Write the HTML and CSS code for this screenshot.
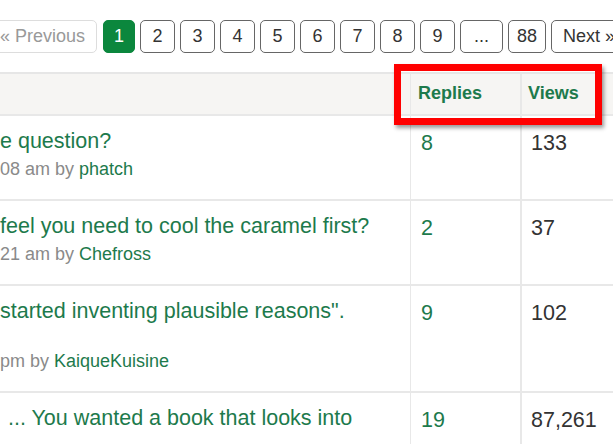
FILE: index.html
```html
<!DOCTYPE html>
<html>
<head>
<meta charset="utf-8">
<link rel="stylesheet" href="styles.css">
</head>
<body>
<div class="page">
  <nav class="pager">
    <span class="pg prev">« Previous</span>
    <span class="pg active">1</span>
    <span class="pg">2</span>
    <span class="pg">3</span>
    <span class="pg">4</span>
    <span class="pg">5</span>
    <span class="pg">6</span>
    <span class="pg">7</span>
    <span class="pg">8</span>
    <span class="pg">9</span>
    <span class="pg dots">...</span>
    <span class="pg">88</span>
    <span class="pg next">Next »</span>
  </nav>

  <div class="topics">
    <div class="row head">
      <div class="cell title"></div>
      <div class="cell hnum">Replies</div>
      <div class="cell hnum hviews">Views</div>
    </div>

    <div class="row">
      <div class="cell title">
        <div class="t">e question?</div>
        <div class="meta">08 am by <span class="user">phatch</span></div>
      </div>
      <div class="cell num replies">8</div>
      <div class="cell num views">133</div>
    </div>

    <div class="row">
      <div class="cell title">
        <div class="t">feel you need to cool the caramel first?</div>
        <div class="meta">21 am by <span class="user">Chefross</span></div>
      </div>
      <div class="cell num replies">2</div>
      <div class="cell num views">37</div>
    </div>

    <div class="row">
      <div class="cell title">
        <div class="t">started inventing plausible reasons".</div>
        <div class="meta gap">pm by <span class="user">KaiqueKuisine</span></div>
      </div>
      <div class="cell num replies">9</div>
      <div class="cell num views">102</div>
    </div>

    <div class="row">
      <div class="cell title">
        <div class="t indent">... You wanted a book that looks into</div>
      </div>
      <div class="cell num replies">19</div>
      <div class="cell num views">87,261</div>
    </div>
  </div>

  <div class="highlight"></div>
</div>
</body>
</html>
```

FILE: styles.css
```css
html, body {
  margin: 0;
  padding: 0;
  background: #ffffff;
}

body {
  font-family: "Liberation Sans", Arial, sans-serif;
  overflow: hidden;
}

.page {
  position: relative;
  width: 613px;
  height: 444px;
  overflow: hidden;
  padding-top: 20px;
  box-sizing: border-box;
}

.pager {
  display: flex;
  gap: 5px;
  margin-left: -11px;
  white-space: nowrap;
}

.pg {
  flex: none;
  box-sizing: border-box;
  height: 33px;
  line-height: 31px;
  min-width: 35px;
  padding: 0 8px;
  text-align: center;
  font-size: 18px;
  color: #333333;
  border: 1px solid #666666;
  border-radius: 5px;
  background: #ffffff;
}

.pg.prev {
  color: #999999;
  border-color: #dddddd;
  padding: 0 11px 0 10px;
  margin-right: 1px;
}

.pg.active {
  min-width: 32px;
  background: #0b873d;
  border-color: #0b873d;
  color: #ffffff;
}

.pg.dots {
  padding: 0 13px;
}

.pg.next {
  padding: 0 11px;
}

.topics {
  margin-top: 19px;
  border-top: 2px solid #e6e6e6;
}

.row {
  display: grid;
  grid-template-columns: 410px 110px 1fr;
  border-bottom: 2px solid #e8e8e8;
}

.row.head {
  background: #f6f5f3;
  height: 40px;
}

.cell {
  box-sizing: border-box;
}

.hnum {
  border-left: 1px solid #e8e8e8;
  padding: 8px 0 0 7px;
  font-size: 18px;
  line-height: 22px;
  font-weight: bold;
  color: #1d7a4c;
}

.hnum.hviews {
  border-left-width: 2px;
  padding-left: 6px;
}

.title {
  padding: 12px 0 19px 0;
}

.t {
  font-size: 21.5px;
  line-height: 26px;
  color: #1d7a4c;
  white-space: nowrap;
}

.t.indent {
  padding-left: 8px;
}

.meta {
  margin-top: 4px;
  font-size: 18px;
  line-height: 22px;
  color: #8a8a8a;
  white-space: nowrap;
}

.meta.gap {
  margin-top: 26px;
}

.user {
  color: #1d7a4c;
}

.num {
  border-left: 1px solid #e8e8e8;
  padding: 14px 0 0 10px;
  font-size: 21.5px;
  line-height: 26px;
}

.num.replies {
  color: #1d7a4c;
}

.num.views {
  border-left-width: 2px;
  padding-left: 9px;
  color: #333333;
}

.highlight {
  position: absolute;
  left: 394px;
  top: 64px;
  width: 208px;
  height: 61px;
  box-sizing: border-box;
  border: 7px solid #ff0000;
  box-shadow: 2px 3px 4px rgba(0, 0, 0, 0.4);
}
```
